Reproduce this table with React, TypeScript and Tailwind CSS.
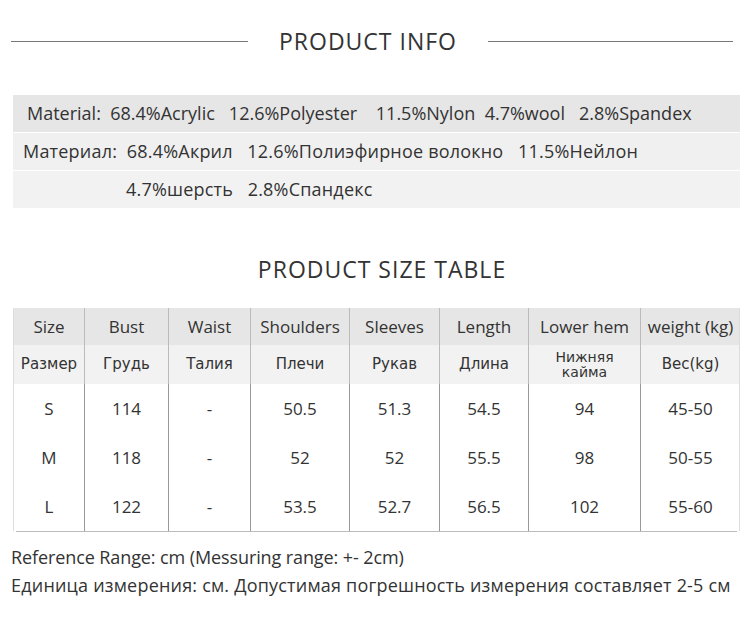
const headEn = ["Size", "Bust", "Waist", "Shoulders", "Sleeves", "Length", "Lower hem", "weight (kg)"];
const headRu = ["Размер", "Грудь", "Талия", "Плечи", "Рукав", "Длина", "Нижняя\nкайма", "Вес(kg)"];
const rows = [
  ["S", "114", "-", "50.5", "51.3", "54.5", "94", "45-50"],
  ["M", "118", "-", "52", "52", "55.5", "98", "50-55"],
  ["L", "122", "-", "53.5", "52.7", "56.5", "102", "55-60"],
];

const grid = "grid grid-cols-[70px_84px_82px_99px_90px_89px_112px_100px]";

function Title({ text, lines }: { text: string; lines?: boolean }) {
  return (
    <div className="flex items-center h-[30px]">
      {lines ? <div className="ml-[4px] w-[237px] h-px bg-[#777]" /> : <div className="flex-1" />}
      <div className="flex-1 whitespace-nowrap text-center text-[23px] tracking-[1px] text-[#333]">{text}</div>
      {lines ? <div className="mr-[17px] w-[245px] h-px bg-[#777]" /> : <div className="flex-1" />}
    </div>
  );
}

export default function App() {
  return (
    <div className="w-[750px] h-[623px] bg-white text-[#333] font-['Open_Sans',sans-serif] overflow-hidden">
      <div className="pt-[26px] pl-[7px]">
        <Title text="PRODUCT INFO" lines />
      </div>

      <div className="mt-[39px] ml-[13px] w-[727px] flex flex-col gap-[1px] text-[18px]">
        <div className="h-[37px] bg-[#e6e6e6] flex items-center pl-[14px] whitespace-pre">
          Material:  68.4%Acrylic   12.6%Polyester    11.5%Nylon  4.7%wool   2.8%Spandex
        </div>
        <div className="h-[37px] bg-[#f0f0f0] flex items-center pl-[10px] whitespace-pre tracking-[0.2px]">
          Материал:  68.4%Акрил   12.6%Полиэфирное волокно   11.5%Нейлон
        </div>
        <div className="h-[37px] bg-[#f2f2f2] flex items-center pl-[113px] whitespace-pre tracking-[0.2px]">
          4.7%шерсть   2.8%Спандекс
        </div>
      </div>

      <div className="mt-[46px] pl-[14px]">
        <Title text="PRODUCT SIZE TABLE" />
      </div>

      <div className="mt-[24px] ml-[13px] w-[727px] border-l border-r border-[#ddd]">
        <div className={`${grid} h-[37px] bg-[#e6e6e6] text-[17px]`}>
          {headEn.map((h, i) => (
            <div key={h} className={`flex items-center justify-center ${i > 0 ? "border-l border-[#bbb]" : ""}`}>
              {h}
            </div>
          ))}
        </div>
        <div className={`${grid} h-[39px] bg-[#f2f2f2] text-[15px] font-['DejaVu_Sans',sans-serif]`}>
          {headRu.map((h, i) => (
            <div
              key={h}
              className={`flex items-center justify-center text-center whitespace-pre leading-[15px] ${i === 6 ? "text-[14px]" : ""} ${i > 0 ? "border-l border-[#bbb]" : ""}`}
            >
              {h}
            </div>
          ))}
        </div>
        {rows.map((r) => (
          <div key={r[0]} className={`${grid} h-[49px] text-[17px]`}>
            {r.map((c, i) => (
              <div key={i} className={`flex items-center justify-center ${i > 0 ? "border-l border-[#999]" : ""}`}>
                {c}
              </div>
            ))}
          </div>
        ))}
      </div>
      <div className="ml-[16px] w-[721px] h-px bg-[#bbb]" />

      <div className="mt-[11px] pl-[11px] text-[18px] leading-[28px] text-[#333]">
        <div className="tracking-[-0.1px]">Reference Range: cm (Messuring range: +- 2cm)</div>
        <div className="tracking-[0.2px]">Единица измерения: см. Допустимая погрешность измерения составляет 2-5 см</div>
      </div>
    </div>
  );
}
